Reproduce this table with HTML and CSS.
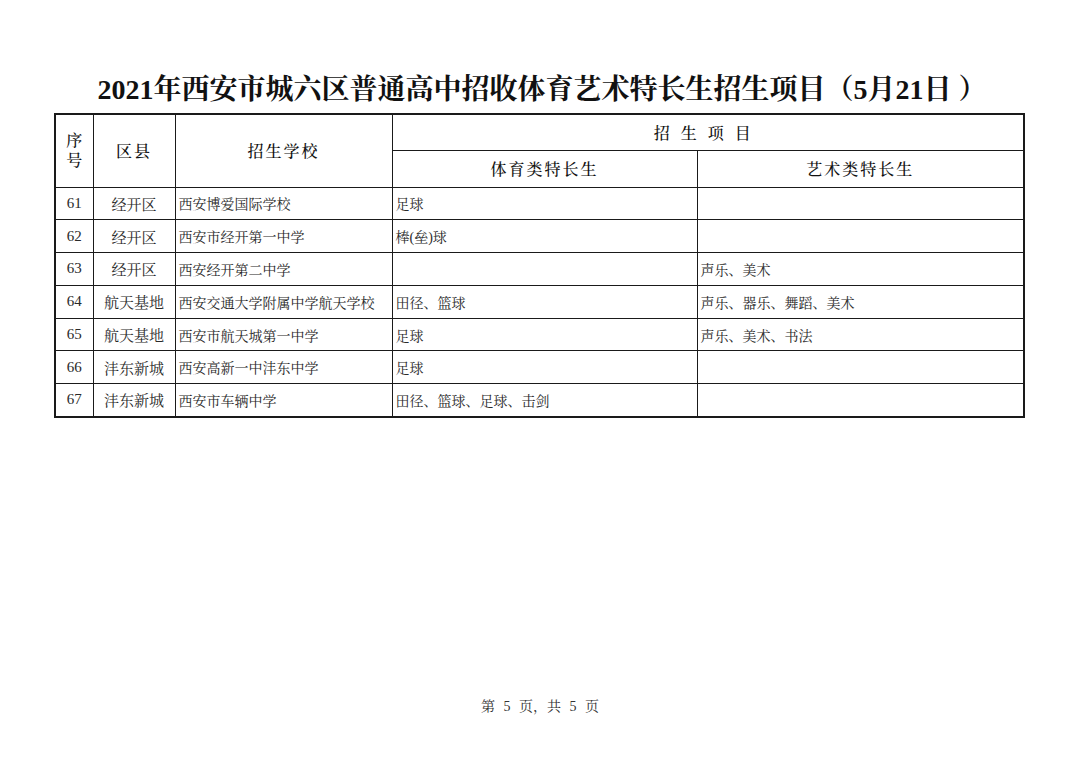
FILE: index.html
```html
<!DOCTYPE html>
<html lang="zh-CN">
<head>
<meta charset="utf-8">
<title>2021年西安市城六区普通高中招收体育艺术特长生招生项目</title>
<link rel="stylesheet" href="styles.css">
</head>
<body>
<div class="page">
  <h1 class="title">2021年西安市城六区普通高中招收体育艺术特长生招生项目（5月21日 ）</h1>
  <table class="grid">
    <colgroup>
      <col class="c-no">
      <col class="c-dist">
      <col class="c-school">
      <col class="c-sport">
      <col class="c-art">
    </colgroup>
    <thead>
      <tr class="h1">
        <th rowspan="2" class="th-no">序<br>号</th>
        <th rowspan="2" class="th-sp">区县</th>
        <th rowspan="2" class="th-sp">招生学校</th>
        <th colspan="2" class="th-wide">招生项目</th>
      </tr>
      <tr class="h2">
        <th class="th-sp">体育类特长生</th>
        <th class="th-sp">艺术类特长生</th>
      </tr>
    </thead>
    <tbody>
      <tr><td class="num">61</td><td class="ctr">经开区</td><td>西安博爱国际学校</td><td>足球</td><td></td></tr>
      <tr><td class="num">62</td><td class="ctr">经开区</td><td>西安市经开第一中学</td><td>棒(垒)球</td><td></td></tr>
      <tr><td class="num">63</td><td class="ctr">经开区</td><td>西安经开第二中学</td><td></td><td>声乐、美术</td></tr>
      <tr><td class="num">64</td><td class="ctr">航天基地</td><td>西安交通大学附属中学航天学校</td><td>田径、篮球</td><td>声乐、器乐、舞蹈、美术</td></tr>
      <tr><td class="num">65</td><td class="ctr">航天基地</td><td>西安市航天城第一中学</td><td>足球</td><td>声乐、美术、书法</td></tr>
      <tr><td class="num">66</td><td class="ctr">沣东新城</td><td>西安高新一中沣东中学</td><td>足球</td><td></td></tr>
      <tr><td class="num">67</td><td class="ctr">沣东新城</td><td>西安市车辆中学</td><td>田径、篮球、足球、击剑</td><td></td></tr>
    </tbody>
  </table>
  <div class="footer">第 5 页，共 5 页</div>
</div>
</body>
</html>
```
FILE: styles.css
```css
html, body {
  margin: 0;
  padding: 0;
  background: #ffffff;
}
body {
  font-family: "Liberation Serif", "Noto Serif CJK SC", "Noto Sans CJK SC", serif;
  color: #1a1a1a;
}
.page {
  width: 1080px;
  height: 763px;
  display: flex;
  flex-direction: column;
}
.title {
  margin: 71px 0 0 0;
  padding-left: 4px;
  height: 38px;
  line-height: 38px;
  font-size: 28px;
  font-weight: 700;
  color: #111;
  text-align: center;
  white-space: nowrap;
}
.grid {
  margin: 4px 0 0 54px;
  width: 969px;
  border-collapse: collapse;
  table-layout: fixed;
  border: 2px solid #1a1a1a;
}
.c-no { width: 38px; }
.c-dist { width: 82px; }
.c-school { width: 217px; }
.c-sport { width: 305px; }
.c-art { width: 327px; }
.grid th, .grid td {
  border: 1.5px solid #1a1a1a;
  padding: 0;
  font-size: 14px;
  color: #2a2a2a;
  white-space: nowrap;
}
.grid th {
  font-weight: 500;
  font-size: 16px;
  color: #111;
  text-align: center;
}
.h1 { height: 36px; }
.h2 { height: 37px; }
.th-no {
  line-height: 20px;
  font-size: 16px;
}
.th-sp {
  letter-spacing: 2px;
}
.th-wide {
  letter-spacing: 11px;
  font-size: 15px;
}
.grid tbody tr { height: 32.8px; }
.grid td { padding-left: 3px; }
.grid td.num {
  text-align: center;
  padding-left: 0;
  font-size: 15px;
}
.grid td.ctr {
  text-align: center;
  padding-left: 0;
  font-size: 15px;
}
.footer {
  margin: 279px 0 0 0;
  padding-left: 0;
  line-height: 20px;
  font-size: 14px;
  color: #333;
  text-align: center;
  word-spacing: 5px;
}
```
